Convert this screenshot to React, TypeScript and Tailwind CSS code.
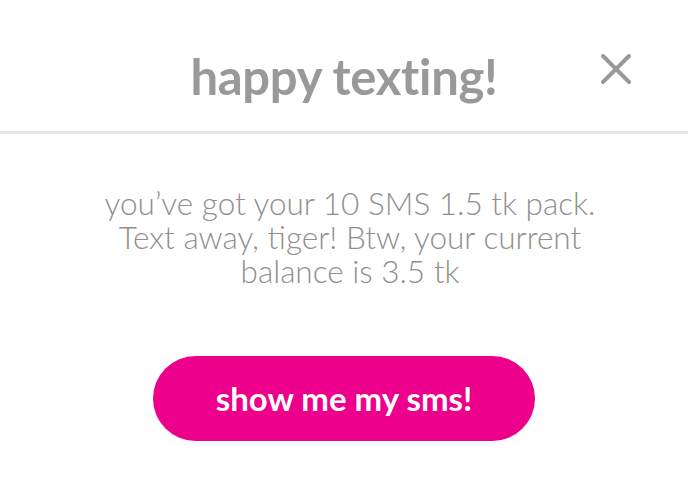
import React from "react";

export default function App() {
  return (
    <div className="w-[688px] h-[485px] bg-white flex flex-col" style={{ fontFamily: "Lato, 'Open Sans', sans-serif" }}>
      <div className="h-[131px] flex items-center justify-center relative">
        <h1 className="text-[49px] font-bold text-[#999999] leading-none mt-[22px] tracking-[-0.3px]">happy texting!</h1>
        <button className="absolute left-[600px] top-[53px] w-[32px] h-[32px]">
          <svg viewBox="0 0 32 32" width="32" height="32">
            <path d="M3 3 L29 29 M29 3 L3 29" stroke="#999999" strokeWidth="4" strokeLinecap="round" />
          </svg>
        </button>
      </div>
      <div className="h-[3px] bg-[#e6e6e6]" />
      <div className="flex flex-col items-center">
        <p className="mt-[52px] ml-[12px] text-[31.5px] leading-[34px] text-[#8f8f8f] text-center font-light w-[540px]">
          you’ve got your 10 SMS 1.5 tk pack. Text away, tiger! Btw, your current balance is 3.5 tk
        </p>
        <button className="mt-[68px] w-[382px] h-[85px] rounded-full bg-[#ec008c] text-white text-[33px] font-bold">
          show me my sms!
        </button>
      </div>
    </div>
  );
}
